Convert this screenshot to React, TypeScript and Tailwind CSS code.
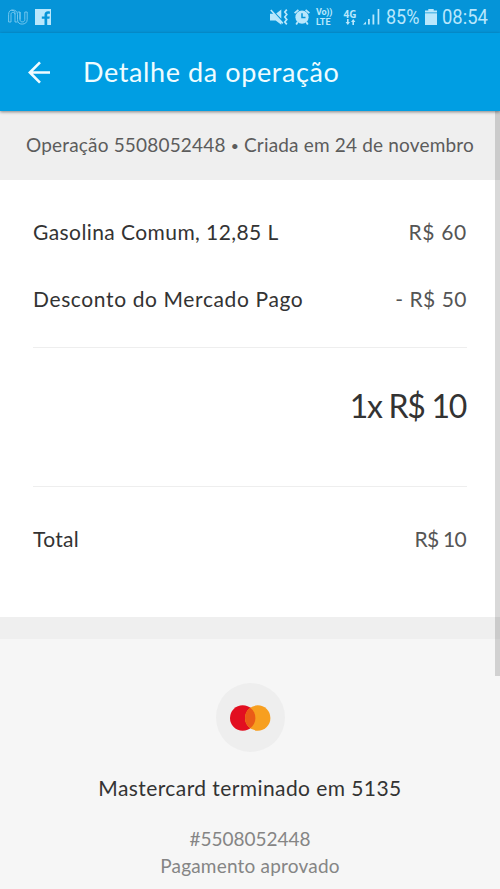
import { clsx } from "clsx";

type Item = { label: string; amount: string; labelClass?: string; amountClass?: string };

const items: Item[] = [
  { label: "Gasolina Comum, 12,85 L", amount: "R$ 60", labelClass: "tracking-[0.42px]", amountClass: "tracking-[0.7px]" },
  { label: "Desconto do Mercado Pago", amount: "- R$ 50", labelClass: "tracking-[0.62px]", amountClass: "tracking-[0.5px]" },
];

function NuIcon() {
  return (
    <svg className="w-5 h-4" viewBox="0 0 20 16" fill="none" stroke="currentColor" strokeWidth="0.8" opacity="0.75">
      <path d="M.6 13V5.5C.6 2.5 2 1 4.7 1s4.8 1.6 4.8 4.5v5c0 3 1.6 4.6 4.6 4.6s5.1-1.6 5.1-4.6V3h-2.4v7.5c0 1.5-.8 2.4-2.4 2.4s-2.4-.9-2.4-2.4V3H9.5" />
      <path d="M.6 13H3V5.5c0-1.3.6-2.1 1.7-2.1S7 4.2 7 5.5V13h2.5M3.5 1.2c3 .1 3.6 1.9 3.6 4.3M12 3v7.5" />
    </svg>
  );
}

function FacebookIcon() {
  return (
    <svg className="w-4 h-4" viewBox="0 0 16 16">
      <path fill="currentColor" d="M0 0h16v16h-3.8V9.8h2.2l.4-2.4h-2.6V5.9c0-.8.4-1.2 1.3-1.2h1.4V2.4c-.5-.1-1.1-.2-1.9-.2-2.2 0-3.5 1.3-3.5 3.5v1.7H6.8v2.4h2.7V16H0z" />
    </svg>
  );
}

function MuteIcon() {
  return (
    <svg className="w-[18px] h-4" viewBox="0 0 18 16" fill="none" stroke="currentColor">
      <path fill="currentColor" stroke="none" d="M0 4.8h3.5L11.3 13v2.8L5.7 11.4H0zM11.3.6v9.2L6.2 4.4z" />
      <path d="M.8 1 12.8 14.4" strokeWidth="1.6" />
      <path d="m16.8.6-2 2.4 2 2.5-2 2.5 2 2.5-2 2.5 2 2.4" strokeWidth="1.7" />
    </svg>
  );
}

function AlarmIcon() {
  return (
    <svg className="w-4 h-4" viewBox="0 0 16 16" fill="none">
      <circle cx="8" cy="8.2" r="6.6" fill="currentColor" />
      <path d="M.6 4.2 4.4.8M15.4 4.2 11.6.8M3.7 13l-1.5 2.4M12.3 13l1.5 2.4" stroke="currentColor" strokeWidth="1.8" />
      <path d="M8 4.2v4.4h3.5" stroke="#0594d8" strokeWidth="1.5" />
    </svg>
  );
}

function DataArrows() {
  return (
    <svg className="w-[11px] h-[6px]" viewBox="0 0 11 6" fill="currentColor">
      <path d="M2 0h1.6v3H5L2.8 6 .6 3H2zM7.4 6H9V3h1.4L8.2 0 6 3h1.4z" />
    </svg>
  );
}

function SignalIcon() {
  return (
    <svg className="w-[17px] h-4" viewBox="0 0 17 16" fill="currentColor">
      <path d="M0 15.5 3 12.5v3zM5 10h1.8v5.5H5zM9.5 5.5h1.8v10H9.5zM14.6 0h1.7v15.5h-1.7z" />
    </svg>
  );
}

function BatteryIcon() {
  return (
    <svg className="w-3 h-4" viewBox="0 0 12 16" fill="currentColor">
      <path d="M3.3 0h5.4v1.5H12v2H0v-2h3.3zM0 4.2h12V16H0z" />
    </svg>
  );
}

function StatusBar() {
  return (
    <div className="h-[33px] bg-[#0594d8] flex items-center text-[#b9e7fc] pl-2 pr-3">
      <NuIcon />
      <div className="ml-[7px]">
        <FacebookIcon />
      </div>
      <div className="ml-auto flex items-center">
        <MuteIcon />
        <div className="ml-1.5">
          <AlarmIcon />
        </div>
        <div className="ml-1.5 w-[17px] text-[9px] leading-[10px] font-bold font-[Roboto,sans-serif]">
          <div className="whitespace-nowrap tracking-[-0.2px]">Vo))</div>
          <div className="whitespace-nowrap">LTE</div>
        </div>
        <div className="ml-[10px] w-[14px] flex flex-col items-center font-['Open_Sans',sans-serif]">
          <div className="text-[10px] leading-[10px] font-bold">4G</div>
          <DataArrows />
        </div>
        <div className="ml-1.5">
          <SignalIcon />
        </div>
        <div className="ml-[6px] w-[33px] whitespace-nowrap text-[20px] leading-none origin-left scale-x-[0.9] font-[Roboto,sans-serif]">85%</div>
        <div className="ml-[6px]">
          <BatteryIcon />
        </div>
        <div className="ml-[5px] w-[46px] whitespace-nowrap text-[20px] leading-none origin-left scale-x-[0.92] font-[Roboto,sans-serif]">08:54</div>
      </div>
    </div>
  );
}

function AppBar() {
  return (
    <header className="relative z-10 h-[78px] bg-[#009ee3] flex items-center pl-7 text-[#effcff] shadow-[0_1px_3px_rgba(0,0,0,0.45)]">
      <svg className="w-[23px] h-[23px]" viewBox="0 0 23 23" fill="none" stroke="currentColor" strokeWidth="2.6">
        <path d="M22 11.5H2M12 1.3 1.8 11.5 12 21.7" />
      </svg>
      <h1 className="ml-8 text-[27px] leading-8 tracking-[0.6px] whitespace-nowrap">Detalhe da operação</h1>
    </header>
  );
}

function Row({ label, amount, labelClass, amountClass, className }: Item & { className?: string }) {
  return (
    <div className={clsx("flex items-center justify-between text-[21px] leading-7 whitespace-nowrap", className)}>
      <span className={clsx("text-[#333]", labelClass)}>{label}</span>
      <span className={clsx("text-[#555]", amountClass)}>{amount}</span>
    </div>
  );
}

function CardBadge() {
  return (
    <div className="w-[69px] h-[69px] rounded-full bg-[#eee] flex items-center justify-center">
      <svg className="w-[41px] h-[26px]" viewBox="0 0 41 26">
        <circle cx="12.7" cy="13" r="12.7" fill="#e20e20" />
        <circle cx="27.7" cy="13" r="12.7" fill="#f79f1f" />
        <path d="M20.2 2.75a12.7 12.7 0 0 1 0 20.5 12.7 12.7 0 0 1 0-20.5z" fill="#ea5b17" />
      </svg>
    </div>
  );
}

export default function App() {
  return (
    <div className="w-full h-[889px] overflow-hidden flex flex-col bg-[#f6f6f6] font-[Lato,sans-serif]">
      <StatusBar />
      <AppBar />

      <main className="relative flex-1 flex flex-col">
        <div className="h-[69px] bg-[#efefef] flex items-center justify-center gap-[5px] text-[19px] tracking-[0.18px] text-[#5c5c5c] whitespace-nowrap">
          <span>Operação 5508052448</span>
          <span className="text-[14px]">•</span>
          <span>Criada em 24 de novembro</span>
        </div>

        <section className="h-[437px] bg-white px-[33px] pt-[38px]">
          <div className="flex flex-col gap-[39px] h-[129px]">
            {items.map((item) => (
              <Row key={item.label} {...item} />
            ))}
          </div>
          <div className="h-[140px] border-y border-[#eee] pt-[38px] pr-px text-right text-[32px] leading-10 tracking-[-1.3px] text-[#333] whitespace-nowrap">
            1x R$ 10
          </div>
          <Row label="Total" amount="R$ 10" labelClass="tracking-[0.3px]" amountClass="tracking-[-0.7px] mr-px" className="mt-[38px]" />
        </section>

        <div className="h-[22px] bg-[#efefef]" />

        <section className="flex flex-col items-center pt-11 whitespace-nowrap">
          <CardBadge />
          <h2 className="mt-[22px] text-[21px] leading-7 tracking-[0.42px] text-[#333]">Mastercard terminado em 5135</h2>
          <div className="mt-[23px] text-[19px] leading-[27px] text-[#858585] text-center">
            <p>#5508052448</p>
            <p className="tracking-[0.2px]">Pagamento aprovado</p>
          </div>
        </section>

        {/* Scroll thumb */}
        <div className="absolute right-0 top-0 w-[5.5px] h-[565px] bg-black/15" />
      </main>
    </div>
  );
}
